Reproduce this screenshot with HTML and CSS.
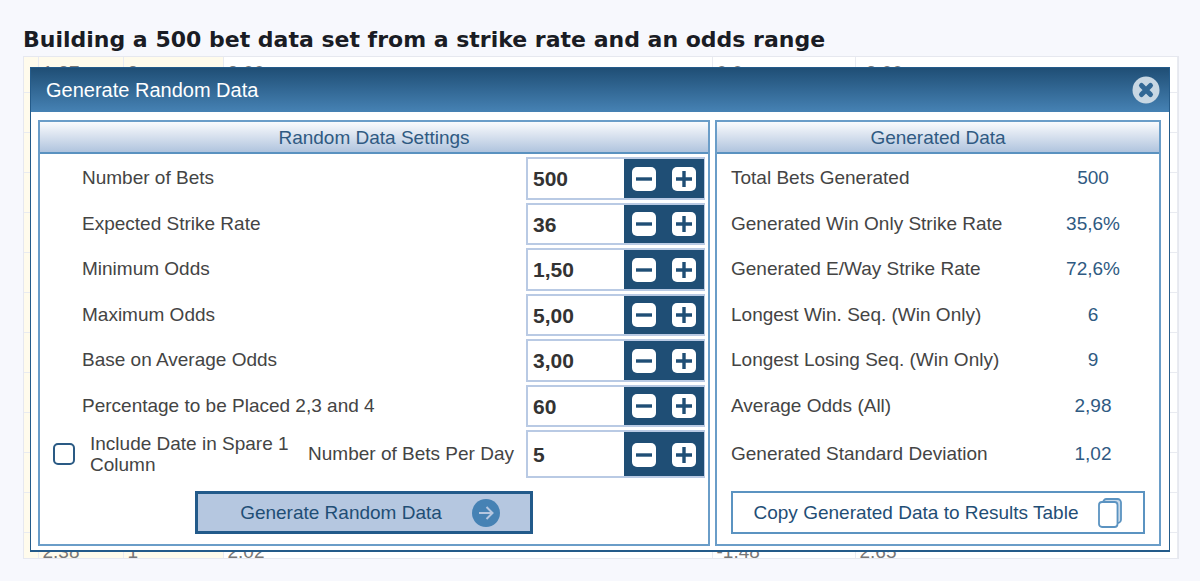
FILE: index.html
```html
<!DOCTYPE html>
<html lang="en">
<head>
  <meta charset="UTF-8" />
  <title>Generate Random Data</title>
  <link rel="stylesheet" href="styles.css">
</head>
<body>

<h1>Building a 500 bet data set from a strike rate and an odds range</h1>

<div class="frame">

  <!-- Results table behind the dialog -->
  <table class="results" aria-hidden="true">
    <colgroup>
      <col class="col-edge"><col class="col-odds"><col class="col-place"><col class="col-wide"><col class="col-profit"><col>
    </colgroup>
    <tbody>
      <tr><td></td><td>1.37</td><td>2</td><td>2.00</td><td>0.0</td><td>-2.00</td></tr>
      <tr><td></td><td></td><td></td><td></td><td></td><td></td></tr>
      <tr><td></td><td></td><td></td><td></td><td></td><td></td></tr>
      <tr><td></td><td></td><td></td><td></td><td></td><td></td></tr>
      <tr><td></td><td></td><td></td><td></td><td></td><td></td></tr>
      <tr><td></td><td></td><td></td><td></td><td></td><td></td></tr>
      <tr><td></td><td></td><td></td><td></td><td></td><td></td></tr>
      <tr><td></td><td></td><td></td><td></td><td></td><td></td></tr>
      <tr><td></td><td></td><td></td><td></td><td></td><td></td></tr>
      <tr><td></td><td></td><td></td><td></td><td></td><td></td></tr>
      <tr><td></td><td></td><td></td><td></td><td></td><td></td></tr>
      <tr><td></td><td></td><td></td><td></td><td></td><td></td></tr>
      <tr><td></td><td>2.38</td><td>1</td><td>2.02</td><td>-1.48</td><td>2.65</td></tr>
    </tbody>
  </table>

  <!-- Icons shared by the steppers -->
  <svg class="sprite" aria-hidden="true">
    <symbol id="minus" viewBox="0 0 24 24">
      <rect width="24" height="24" rx="5" fill="#fff"/>
      <path d="M4 12h16" stroke="#1f4e75" stroke-width="3.4"/>
    </symbol>
    <symbol id="plus" viewBox="0 0 24 24">
      <rect width="24" height="24" rx="5" fill="#fff"/>
      <path d="M4 12h16M12 4v16" stroke="#1f4e75" stroke-width="3.4"/>
    </symbol>
  </svg>

  <div class="dialog" role="dialog" aria-labelledby="dialog-title">
    <div class="dialog-header">
      <h2 id="dialog-title">Generate Random Data</h2>
      <button type="button" class="close" aria-label="Close">
        <svg width="28" height="28" viewBox="0 0 28 28">
          <circle cx="14" cy="14" r="13.5" fill="#c8d7e3"/>
          <path d="M9.5 9.5l9 9M18.5 9.5l-9 9" stroke="#336895" stroke-width="5" stroke-linecap="round"/>
        </svg>
      </button>
    </div>

    <div class="panels">
      <form class="panel">
        <h3>Random Data Settings</h3>
        <div class="rows">
          <div class="setting">
            <label for="bets">Number of Bets</label>
            <div class="stepper">
              <input type="text" id="bets" value="500">
              <button type="button" aria-label="Decrease"><svg><use href="#minus"/></svg></button>
              <button type="button" aria-label="Increase"><svg><use href="#plus"/></svg></button>
            </div>
          </div>
          <div class="setting">
            <label for="strike">Expected Strike Rate</label>
            <div class="stepper">
              <input type="text" id="strike" value="36">
              <button type="button" aria-label="Decrease"><svg><use href="#minus"/></svg></button>
              <button type="button" aria-label="Increase"><svg><use href="#plus"/></svg></button>
            </div>
          </div>
          <div class="setting">
            <label for="min-odds">Minimum Odds</label>
            <div class="stepper">
              <input type="text" id="min-odds" value="1,50">
              <button type="button" aria-label="Decrease"><svg><use href="#minus"/></svg></button>
              <button type="button" aria-label="Increase"><svg><use href="#plus"/></svg></button>
            </div>
          </div>
          <div class="setting">
            <label for="max-odds">Maximum Odds</label>
            <div class="stepper">
              <input type="text" id="max-odds" value="5,00">
              <button type="button" aria-label="Decrease"><svg><use href="#minus"/></svg></button>
              <button type="button" aria-label="Increase"><svg><use href="#plus"/></svg></button>
            </div>
          </div>
          <div class="setting">
            <label for="avg-odds">Base on Average Odds</label>
            <div class="stepper">
              <input type="text" id="avg-odds" value="3,00">
              <button type="button" aria-label="Decrease"><svg><use href="#minus"/></svg></button>
              <button type="button" aria-label="Increase"><svg><use href="#plus"/></svg></button>
            </div>
          </div>
          <div class="setting">
            <label for="placed">Percentage to be Placed 2,3 and 4</label>
            <div class="stepper">
              <input type="text" id="placed" value="60">
              <button type="button" aria-label="Decrease"><svg><use href="#minus"/></svg></button>
              <button type="button" aria-label="Increase"><svg><use href="#plus"/></svg></button>
            </div>
          </div>
          <div class="setting setting-date">
            <input type="checkbox" id="include-date">
            <label for="include-date" class="date-label">Include Date in Spare 1 Column</label>
            <label for="per-day" class="per-day">Number of Bets Per Day</label>
            <div class="stepper">
              <input type="text" id="per-day" value="5">
              <button type="button" aria-label="Decrease"><svg><use href="#minus"/></svg></button>
              <button type="button" aria-label="Increase"><svg><use href="#plus"/></svg></button>
            </div>
          </div>
        </div>
        <button type="button" class="action generate">
          Generate Random Data
          <svg width="28" height="28" viewBox="0 0 28 28">
            <circle cx="14" cy="14" r="14" fill="#4682b4"/>
            <path d="M7 14h13M14.5 8l6 6-6 6" fill="none" stroke="#b5c7e0" stroke-width="2"/>
          </svg>
        </button>
      </form>

      <section class="panel">
        <h3>Generated Data</h3>
        <dl class="rows">
          <div class="stat"><dt>Total Bets Generated</dt><dd>500</dd></div>
          <div class="stat"><dt>Generated Win Only Strike Rate</dt><dd>35,6%</dd></div>
          <div class="stat"><dt>Generated E/Way Strike Rate</dt><dd>72,6%</dd></div>
          <div class="stat"><dt>Longest Win. Seq. (Win Only)</dt><dd>6</dd></div>
          <div class="stat"><dt>Longest Losing Seq. (Win Only)</dt><dd>9</dd></div>
          <div class="stat"><dt>Average Odds (All)</dt><dd>2,98</dd></div>
          <div class="stat"><dt>Generated Standard Deviation</dt><dd>1,02</dd></div>
        </dl>
        <button type="button" class="action copy">
          Copy Generated Data to Results Table
          <svg width="24" height="30" viewBox="0 0 24 30" fill="#fff" stroke="#5b93c1" stroke-width="1.8">
            <rect x="5" y="1" width="18" height="24" rx="3.5" fill="#c9daea"/>
            <rect x="1" y="4" width="18.5" height="25" rx="3"/>
          </svg>
        </button>
      </section>
    </div>
  </div>
</div>

</body>
</html>
```
FILE: styles.css
```css
* {
  box-sizing: border-box;
}

body {
  margin: 0;
  padding: 24px 21px 23px 23px;
  background: #f7f8fd;
  font-family: "Liberation Sans", Arial, sans-serif;
  font-size: 19px;
  color: #444;
}

h1, h2, h3, dl, dd {
  margin: 0;
}

h1 {
  font: bold 22px/32px "DejaVu Sans", sans-serif;
  color: #1a1c24;
}

/* Results table, mostly covered by the dialog */
.frame {
  position: relative;
  border: 1px solid #e6e8ef;
  background: #fff;
  overflow: hidden;
  padding: 10px 8px 6px 6px;
}

.results {
  position: absolute;
  top: -5px;
  left: 0;
  width: 100%;
  table-layout: fixed;
  border-collapse: collapse;
}

.results td {
  height: 40px;
  padding: 0 4px;
  border: solid #e9ebf1;
  border-width: 0 1px 1px 0;
  white-space: nowrap;
  color: #777;
}

.results tr:first-child td {
  padding-top: 2px;
}

.results td:nth-child(-n+3) {
  background: #fffbec;
}

.col-edge { width: 14px; }
.col-odds { width: 85px; }
.col-place { width: 100px; }
.col-wide { width: 489px; }
.col-profit { width: 143px; }

.sprite {
  position: absolute;
  width: 0;
  height: 0;
}

/* Dialog */
.dialog {
  position: relative;
  border: 1px solid #245b8a;
  border-bottom-width: 2px;
  background: #fff;
}

.dialog-header {
  display: flex;
  justify-content: space-between;
  align-items: center;
  height: 44px;
  padding: 0 9px 0 15px;
  background: linear-gradient(#1f4e75, #4682b4);
}

.dialog-header h2 {
  font-size: 20px;
  font-weight: normal;
  color: #fff;
}

button {
  padding: 0;
  border: 0;
  font: inherit;
  cursor: pointer;
}

.close {
  display: flex;
  background: none;
}

/* Panels */
.panels {
  display: grid;
  grid-template-columns: 672fr 446fr;
  gap: 5px;
  padding: 8px 8px 4px 7px;
}

.panel {
  display: flex;
  flex-direction: column;
  border: 2px solid #6a9dc8;
  padding-bottom: 10px;
}

.panel h3 {
  height: 32px;
  border-bottom: 2px solid #5a92c0;
  background: linear-gradient(#fafbfd, #b0c4de);
  font-size: 19px;
  font-weight: normal;
  line-height: 31px;
  text-align: center;
  color: #2f5a82;
}

.rows {
  display: grid;
  grid-template-rows: repeat(6, 1fr) 48px;
  gap: 3px;
  height: 321px;
  margin: 3px 0 13px;
}

.setting {
  display: flex;
  justify-content: space-between;
  padding: 0 3px 0 42px;
}

.setting label {
  align-self: center;
}

.setting-date {
  padding-left: 13px;
}

.setting-date input[type="checkbox"] {
  appearance: none;
  align-self: center;
  flex: none;
  width: 22px;
  height: 22px;
  margin: 0 15px 0 0;
  border: 2px solid #2a5a84;
  border-radius: 5px;
  background: #fff;
}

.setting-date .date-label {
  width: 206px;
  line-height: 21px;
}

.setting-date .per-day {
  margin: 0 12px 0 auto;
}

.stepper {
  display: flex;
  flex: none;
  width: 179px;
  border: 2px solid #b9cae4;
  border-right-width: 1px;
  background: #1f4e75;
}

.stepper input {
  flex: 1;
  min-width: 0;
  padding: 2px 5px 0;
  border: 0;
  background: #fff;
  font: bold 21px "Liberation Sans", Arial, sans-serif;
  color: #333;
}

.stepper button {
  display: flex;
  justify-content: center;
  align-items: center;
  width: 40px;
  padding-top: 1px;
  background: #1f4e75;
}

.stepper svg {
  width: 24px;
  height: 24px;
}

.stat {
  display: flex;
  align-items: center;
  padding-left: 14px;
}

.stat dt {
  flex: 1;
}

.stat dd {
  width: 132px;
  text-align: center;
  color: #2f5a82;
}

/* Buttons under the panels */
.action {
  display: flex;
  justify-content: center;
  align-items: center;
  height: 43px;
  color: #1f4e75;
}

.generate {
  gap: 30px;
  width: 338px;
  margin-left: 155px;
  padding-left: 12px;
  border: 3px solid #225a8a;
  background: #b5c7e0;
}

.copy {
  gap: 20px;
  margin: 0 14px;
  border: 2px solid #5b93c1;
  background: #fff;
}
```
